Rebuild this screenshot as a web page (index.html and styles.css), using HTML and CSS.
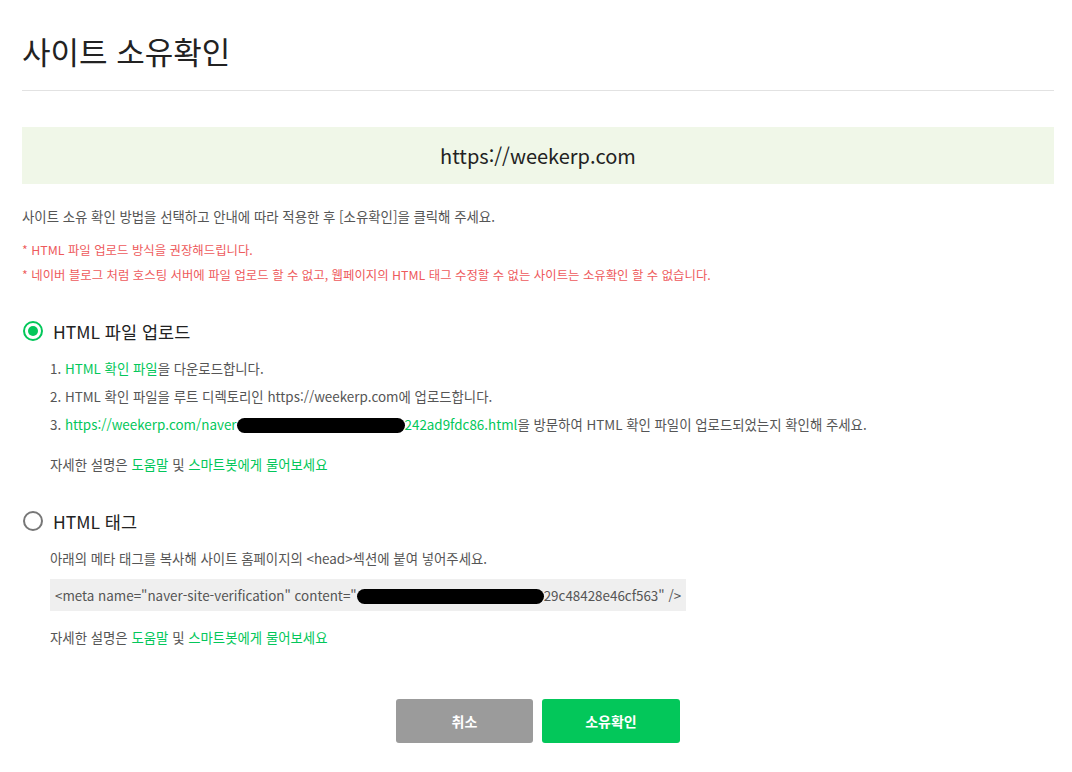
FILE: index.html
```html
<!DOCTYPE html>
<html lang="ko">
<head>
    <meta charset="UTF-8">
    <meta name="viewport" content="width=device-width, initial-scale=1.0">
    <title>사이트 소유확인</title>
    <link rel="stylesheet" href="styles.css">
</head>
<body>
    <div class="wrap">
        <h1 class="title">사이트 소유확인</h1>

        <div class="site-url">https://weekerp.com</div>

        <p class="desc">사이트 소유 확인 방법을 선택하고 안내에 따라 적용한 후 [소유확인]을 클릭해 주세요.</p>
        <ul class="notice">
            <li>* HTML 파일 업로드 방식을 권장해드립니다.</li>
            <li>* 네이버 블로그 처럼 호스팅 서버에 파일 업로드 할 수 없고, 웹페이지의 HTML 태그 수정할 수 없는 사이트는 소유확인 할 수 없습니다.</li>
        </ul>

        <!-- method 1 -->
        <div class="method">
            <label class="option">
                <span class="radio checked"></span>
                <span class="option-label">HTML 파일 업로드</span>
            </label>
            <ol class="steps">
                <li>1. <a class="link">HTML 확인 파일</a>을 다운로드합니다.</li>
                <li>2. HTML 확인 파일을 루트 디렉토리인 https://weekerp.com에 업로드합니다.</li>
                <li>3. <a class="link">https://weekerp.com/naver<span class="redact redact-url"></span>242ad9fdc86.html</a>을 방문하여 HTML 확인 파일이 업로드되었는지 확인해 주세요.</li>
            </ol>
            <p class="help">자세한 설명은 <a class="link">도움말</a> 및 <a class="link">스마트봇에게 물어보세요</a></p>
        </div>

        <!-- method 2 -->
        <div class="method">
            <label class="option">
                <span class="radio"></span>
                <span class="option-label">HTML 태그</span>
            </label>
            <p class="guide">아래의 메타 태그를 복사해 사이트 홈페이지의 &lt;head&gt;섹션에 붙여 넣어주세요.</p>
            <div class="meta-code">&lt;meta name="naver-site-verification" content="<span class="redact redact-meta"></span>29c48428e46cf563" /&gt;</div>
            <p class="help">자세한 설명은 <a class="link">도움말</a> 및 <a class="link">스마트봇에게 물어보세요</a></p>
        </div>

        <div class="buttons">
            <button class="btn btn-cancel">취소</button>
            <button class="btn btn-ok">소유확인</button>
        </div>
    </div>
</body>
</html>
```

FILE: styles.css
```css
body {
    font-family: "Noto Sans CJK KR", "Noto Sans", sans-serif;
    margin: 0;
    padding: 0;
    background: #fff;
    color: #555;
}

.wrap {
    width: 1032px;
    margin-left: 22px;
}

.title {
    margin: 0;
    padding: 31px 0 19px;
    font-size: 31px;
    line-height: 40px;
    font-weight: 400;
    color: #222;
    border-bottom: 1px solid #e2e2e2;
}

.site-url {
    margin-top: 36px;
    height: 57px;
    line-height: 57px;
    background: #f0f7e8;
    text-align: center;
    font-size: 20px;
    color: #222;
}

.desc {
    margin: 22px 0 0;
    font-size: 13.4px;
    line-height: 20px;
}

.notice {
    list-style: none;
    margin: 12px 0 0;
    padding: 0;
    font-size: 12.4px;
    line-height: 25px;
    color: #ee5a5c;
}

.method {
    margin-top: 31px;
}

.option {
    display: flex;
    align-items: center;
    gap: 10px;
    height: 24px;
    padding-left: 1px;
}

.radio {
    position: relative;
    width: 16px;
    height: 16px;
    border: 2px solid #777;
    border-radius: 50%;
}

.radio.checked {
    border-color: #03c75a;
}

.radio.checked::after {
    content: "";
    position: absolute;
    left: 3px;
    top: 3px;
    width: 10px;
    height: 10px;
    border-radius: 50%;
    background: #03c75a;
}

.option-label {
    font-size: 17.5px;
    color: #222;
}

.steps {
    list-style: none;
    margin: 11px 0 0;
    padding: 0 0 0 28px;
    font-size: 13.4px;
    line-height: 28px;
}

.link {
    color: #03c75a;
    text-decoration: none;
    cursor: pointer;
}

.redact {
    display: inline-block;
    height: 15px;
    background: #000;
    border-radius: 8px;
    vertical-align: -3px;
}

.redact-url {
    width: 168px;
}

.redact-meta {
    width: 187px;
}

.help {
    margin: 12px 0 0;
    padding-left: 28px;
    font-size: 13.4px;
    line-height: 28px;
}

.guide {
    margin: 11px 0 0;
    padding-left: 28px;
    font-size: 13.4px;
    line-height: 28px;
}

.meta-code {
    display: inline-block;
    margin: 7px 0 0 28px;
    padding: 0 5px;
    height: 32px;
    line-height: 32px;
    background: #efefef;
    font-size: 13.4px;
    color: #555;
}

.buttons {
    display: flex;
    justify-content: center;
    gap: 9px;
    margin-top: 48px;
}

.btn {
    width: 137px;
    height: 44px;
    border: none;
    border-radius: 3px;
    color: #fff;
    font-family: inherit;
    font-size: 14px;
    font-weight: bold;
    cursor: pointer;
}

.btn-cancel {
    background: #9b9b9b;
}

.btn-ok {
    width: 138px;
    background: #03c75a;
}
```
